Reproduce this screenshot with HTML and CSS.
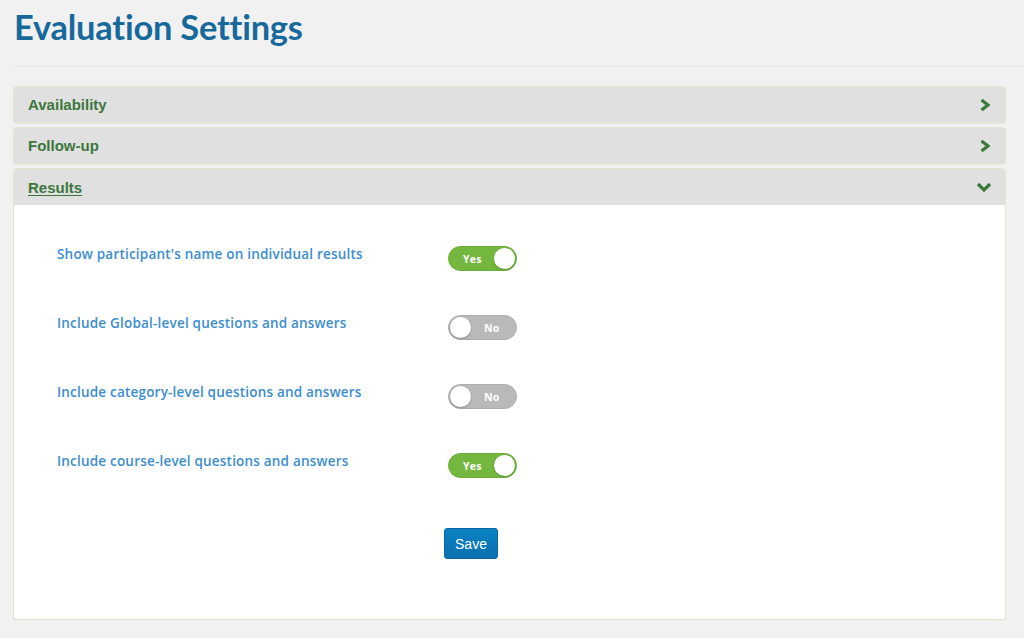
FILE: index.html
```html
<!DOCTYPE html>
<html>
<head>
<meta charset="utf-8">
<link rel="stylesheet" href="styles.css">
</head>
<body>
<div class="page">
  <h1 class="title">Evaluation Settings</h1>
  <div class="rule"></div>
  <div class="panels">
    <div class="panel">
      <div class="panel-head">
        <span class="panel-title">Availability</span>
        <svg class="chev" width="12" height="14" viewBox="0 0 12 14"><path d="M2.5 2 L9 7 L2.5 12" fill="none" stroke="#3a7a38" stroke-width="3.2"/></svg>
      </div>
    </div>
    <div class="panel">
      <div class="panel-head">
        <span class="panel-title">Follow-up</span>
        <svg class="chev" width="12" height="14" viewBox="0 0 12 14"><path d="M2.5 2 L9 7 L2.5 12" fill="none" stroke="#3a7a38" stroke-width="3.2"/></svg>
      </div>
    </div>
    <div class="panel open">
      <div class="panel-head">
        <span class="panel-title link">Results</span>
        <svg class="chev down" width="16" height="12" viewBox="0 0 16 12"><path d="M2 3 L8 9 L14 3" fill="none" stroke="#3a7a38" stroke-width="3.2"/></svg>
      </div>
      <div class="panel-body">
        <div class="row">
          <span class="label">Show participant's name on individual results</span>
          <span class="toggle on"><span class="ttext">Yes</span><span class="knob"></span></span>
        </div>
        <div class="row">
          <span class="label">Include Global-level questions and answers</span>
          <span class="toggle off"><span class="knob"></span><span class="ttext">No</span></span>
        </div>
        <div class="row">
          <span class="label">Include category-level questions and answers</span>
          <span class="toggle off"><span class="knob"></span><span class="ttext">No</span></span>
        </div>
        <div class="row">
          <span class="label">Include course-level questions and answers</span>
          <span class="toggle on"><span class="ttext">Yes</span><span class="knob"></span></span>
        </div>
        <div class="actions">
          <button class="save">Save</button>
        </div>
      </div>
    </div>
  </div>
</div>
</body>
</html>
```
FILE: styles.css
```css
html, body {
  margin: 0;
  padding: 0;
  background: #f1f1f1;
}
.page {
  padding: 0 18px 0 13px;
}
.title {
  margin: 0;
  padding: 7px 0 0 1px;
  height: 48px;
  font-family: Lato, "Open Sans", sans-serif;
  font-weight: 700;
  font-size: 34.4px;
  line-height: 40px;
  color: #17699c;
  letter-spacing: -0.2px;
}
.rule {
  margin-top: 11px;
  margin-right: -18px;
  border-top: 1px solid #e6e6e6;
}
.panels {
  margin-top: 19px;
  display: flex;
  flex-direction: column;
  gap: 4px;
}
.panel {
  border: 1px solid #dde8cf;
  border-radius: 4px;
  background: #e0e0e0;
  box-shadow: 0 1px 1px rgba(0,0,0,0.05);
  overflow: hidden;
}
.panel-head {
  height: 35px;
  display: flex;
  align-items: center;
  justify-content: space-between;
  padding: 0 14px 0 14px;
}
.open .panel-head {
  height: 36px;
}
.panel-title {
  font-family: "Liberation Sans", Arial, sans-serif;
  font-weight: 700;
  font-size: 15px;
  color: #3c763d;
}
.panel-title.link {
  text-decoration: underline;
  text-underline-offset: 2px;
}
.chev { display: block; }
.chev.down { margin-right: -1px; }
.panel-body {
  background: #fff;
  height: 414px;
  padding: 41px 0 0 43px;
  box-sizing: border-box;
}
.row {
  display: grid;
  grid-template-columns: 391px auto;
  align-items: start;
  height: 69px;
}
.label {
  font-family: "Open Sans", sans-serif;
  font-weight: 600;
  font-size: 13.5px;
  letter-spacing: 0.2px;
  line-height: 16px;
  color: #3c8dcf;
  padding-top: 0;
}
.toggle {
  width: 69px;
  height: 25px;
  border-radius: 13px;
  box-sizing: border-box;
  display: flex;
  align-items: center;
  margin-top: 0;
  font-family: "Open Sans", sans-serif;
  font-weight: 700;
  font-size: 10.5px;
  letter-spacing: 0.3px;
  color: #fff;
}
.toggle.on {
  background: #74b73e;
  border: 1px solid #6aae36;
  padding: 0 1px 0 14px;
  justify-content: space-between;
}
.toggle.off {
  background: #b9b9b9;
  border: 1px solid #adadad;
  padding: 0 0 0 1px;
}
.toggle.off .ttext {
  margin-left: 13px;
}
.knob {
  width: 21px;
  height: 21px;
  border-radius: 50%;
  background: #fff;
  box-shadow: 0 1px 2px rgba(0,0,0,0.25);
}
.actions {
  padding-left: 387px;
  padding-top: 6px;
}
.save {
  width: 54px;
  height: 31px;
  border: 1px solid #0a64a0;
  border-radius: 3px;
  background: linear-gradient(#0a82c4, #0a6fae);
  color: #fff;
  font-family: "Liberation Sans", Arial, sans-serif;
  font-size: 14px;
  padding: 0;
}
```
